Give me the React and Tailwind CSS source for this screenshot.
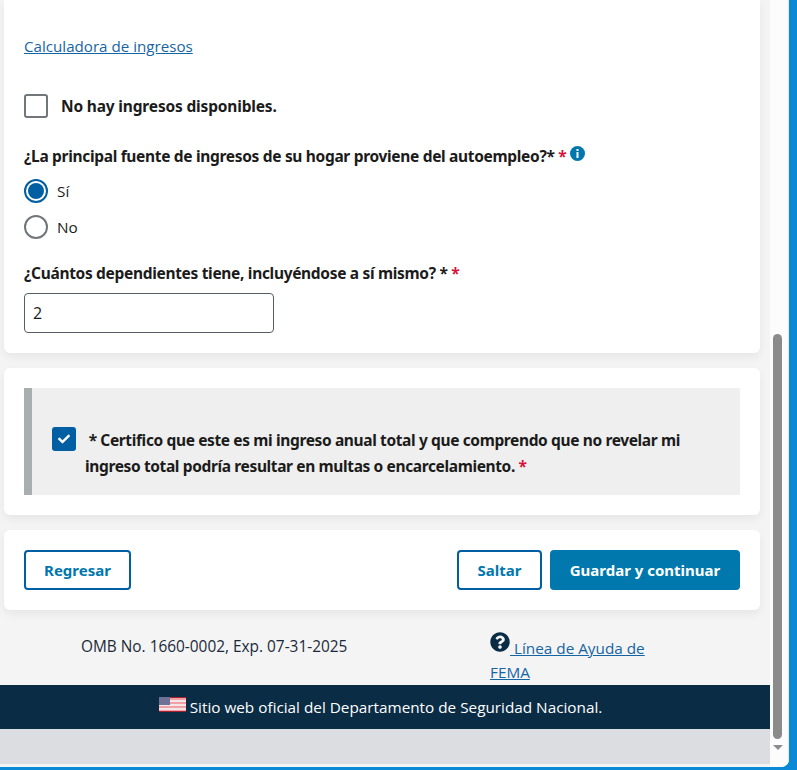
import { FaCheck, FaQuestionCircle } from "react-icons/fa";

const openSans = "font-['Open_Sans',sans-serif]";
const labelFont = "font-['Noto_Sans',sans-serif] font-bold";

function Required() {
  return <span className="text-[#d6113a]">*</span>;
}

function Radio({ label, checked }) {
  return (
    <div className="flex items-center h-[36px]">
      <span
        className={`flex items-center justify-center w-[24px] h-[24px] rounded-full border-2 bg-white ${
          checked ? "border-[#005ea2]" : "border-[#71767a]"
        }`}
      >
        {checked && <span className="w-[16px] h-[16px] rounded-full bg-[#005ea2]" />}
      </span>
      <span className={`ml-[9px] text-[15.3px] text-[#1b1b1b] ${openSans}`}>{label}</span>
    </div>
  );
}

function OutlineButton({ className, children }) {
  return (
    <button className={`h-[40px] rounded-[4px] border-2 border-[#005ea2] bg-white text-[15px] text-[#0078ae] ${labelFont} ${className}`}>
      {children}
    </button>
  );
}

function Flag() {
  return (
    <svg width="27" height="15" viewBox="0 0 27 15" className="shrink-0 -mt-[6px]">
      <rect width="27" height="15" fill="#f0a0a8" />
      <rect y="0" width="27" height="1" fill="#a8202c" />
      <rect y="3" width="27" height="2" fill="#f7e4e4" />
      <rect y="7" width="27" height="2" fill="#f7e4e4" />
      <rect y="11" width="27" height="2" fill="#f7e4e4" />
      <rect y="14" width="27" height="1" fill="#a8202c" />
      <rect y="0" width="11" height="8" fill="#6f7196" />
    </svg>
  );
}

export default function App() {
  return (
    <div className="w-[797px] h-[770px] overflow-hidden bg-[#0a8ad6]">
      <div className="flex w-[789px] h-[767px] bg-[#f4f4f4] rounded-br-[8px] overflow-hidden">
        <div className="w-[770px] flex flex-col">
          <div className="flex-1 px-[4px] pr-[10px] flex flex-col">
            <section className="h-[353px] bg-white rounded-b-[6px] shadow-[0_4px_10px_rgba(0,0,0,0.06)] px-[20px] pt-[36px]">
              <a className={`block text-[15.15px] leading-[20px] underline text-[#1565a3] ${openSans}`}>
                Calculadora de ingresos
              </a>
              <div className="flex items-center h-[24px] mt-[38px]">
                <span className="w-[24px] h-[24px] rounded-[3px] border-2 border-[#71767a] bg-white" />
                <span className={`ml-[13px] pt-[1px] text-[15.5px] tracking-[-0.17px] text-[#1b1b1b] ${labelFont}`}>No hay ingresos disponibles.</span>
              </div>
              <div className={`mt-[26px] flex items-start text-[15.5px] tracking-[-0.32px] leading-[24px] text-[#1b1b1b] ${labelFont}`}>
                <span>
                  ¿La principal fuente de ingresos de su hogar proviene del autoempleo?* <Required />
                </span>
                <svg width="15" height="15" viewBox="0 0 15 15" className="ml-[4px] mt-[2px] shrink-0">
                  <circle cx="7.5" cy="7.5" r="7.5" fill="#0078ae" />
                  <rect x="6.5" y="3" width="2" height="2" fill="#fff" />
                  <rect x="6.5" y="6" width="2" height="6" fill="#fff" />
                </svg>
              </div>
              <div className="mt-[5px]">
                <Radio label="Sí" checked />
                <Radio label="No" />
              </div>
              <div className={`mt-[16px] text-[15.5px] tracking-[-0.32px] leading-[24px] text-[#1b1b1b] ${labelFont}`}>
                ¿Cuántos dependientes tiene, incluyéndose a sí mismo? * <Required />
              </div>
              <input
                readOnly
                value="2"
                className={`mt-[8px] block w-[250px] h-[40px] px-[8px] rounded-[4px] border border-[#565c65] bg-white text-[16px] text-[#1b1b1b] ${openSans}`}
              />
            </section>

            <section className="mt-[15px] h-[147px] bg-white rounded-[6px] shadow-[0_4px_10px_rgba(0,0,0,0.06)] p-[20px]">
              <div className="h-[107px] bg-[#efefef] border-l-[8px] border-[#a9aeb1] pl-[20px] pr-[40px] pt-[39px] flex items-start">
                <span className="shrink-0 flex items-center justify-center w-[24px] h-[24px] rounded-[3px] bg-[#005ea2]">
                  <FaCheck size={12} className="text-white" />
                </span>
                <p className={`ml-[9px] text-[15.5px] tracking-[-0.37px] leading-[26px] text-[#1b1b1b] ${labelFont}`}>
                  &nbsp;* Certifico que este es mi ingreso anual total y que comprendo que no revelar mi ingreso total podría resultar en multas o encarcelamiento. <Required />
                </p>
              </div>
            </section>

            <section className="mt-[15px] h-[80px] bg-white rounded-[6px] shadow-[0_4px_10px_rgba(0,0,0,0.06)] px-[20px] flex items-center justify-between">
              <OutlineButton className="w-[107px]">Regresar</OutlineButton>
              <div className="flex gap-[8px]">
                <OutlineButton className="w-[85px]">Saltar</OutlineButton>
                <button className={`h-[40px] w-[190px] rounded-[4px] bg-[#0078ae] text-white text-[15px] ${labelFont}`}>
                  Guardar y continuar
                </button>
              </div>
            </section>

            <div className="flex flex-1 pl-[77px] pt-[21px]">
              <div className={`w-[409px] text-[15.4px] leading-[32px] text-[#1b2a3a] h-fit ${openSans}`}>
                OMB No. 1660-0002, Exp. 07-31-2025
              </div>
              <a className={`w-[170px] text-[15.3px] leading-[24px] underline text-[#1565a3] mt-[1px] ${openSans}`}>
                <FaQuestionCircle size={20} className="inline-block align-[2px] text-[#0a2c45]" />
                {" "}Línea de Ayuda de FEMA
              </a>
            </div>
          </div>
          <div className={`h-[44px] shrink-0 bg-[#0a2c45] flex items-center justify-center pr-[9px] text-white text-[15.3px] ${openSans}`}>
            <Flag />
            <span className="ml-[4px]">Sitio web oficial del Departamento de Seguridad Nacional.</span>
          </div>
          <div className="h-[35px] shrink-0 bg-[#dcdde0]" />
          <div className="h-[3px] shrink-0 bg-[#f4f4f4]" />
        </div>
        <div className="w-[19px] bg-[#fcfcfc] border-r border-[#e6e6e6] flex flex-col items-center pr-[3px] pt-[334px]">
          <div className="w-[9px] h-[405px] rounded-full bg-[#8b8b8b]" />
          <div className="mt-[6px] w-0 h-0 border-l-[5px] border-r-[5px] border-t-[5px] border-l-transparent border-r-transparent border-t-[#8b8b8b]" />
        </div>
      </div>
    </div>
  );
}
